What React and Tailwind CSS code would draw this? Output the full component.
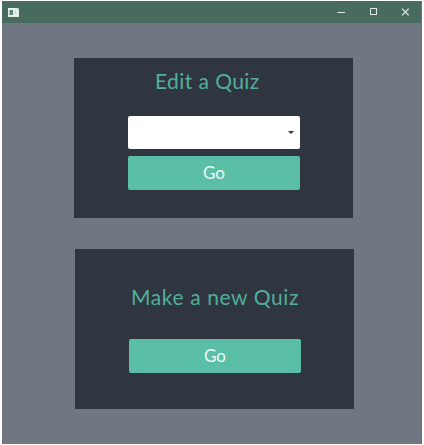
function TitleBar() {
  return (
    <header className="flex h-[22px] shrink-0 items-center justify-between bg-[#486b60] pl-[6px] pr-3">
      <svg width="11" height="9" viewBox="0 0 11 9" aria-hidden="true">
        <rect width="11" height="9" fill="#e3f0ea" />
        <rect x="1.5" y="2" width="3.5" height="5" fill="#5d8276" />
        <rect x="7" y="3" width="1" height="3" fill="#b9cfc5" />
        <path d="M9 0h2v2z" fill="#9fb9ae" />
      </svg>
      <div className="flex items-center gap-6 text-[#dcebe4]">
        <svg width="8" height="8" viewBox="0 0 8 8" stroke="currentColor" aria-label="Minimize">
          <path d="M0.5 4.5h7.5" />
        </svg>
        <svg width="8" height="8" viewBox="0 0 8 8" fill="none" stroke="currentColor" aria-label="Maximize">
          <rect x="1.5" y="0.5" width="6" height="6" />
        </svg>
        <svg width="8" height="8" viewBox="0 0 8 8" stroke="currentColor" strokeWidth="1.2" aria-label="Close">
          <path d="M1 0.7l6.7 6.7M7.7 0.7L1 7.4" />
        </svg>
      </div>
    </header>
  );
}

function GoButton() {
  return (
    <button className="block h-[34px] w-[172px] rounded-[2px] bg-[#5bbfa8] text-center text-[17px] leading-[34px] text-[#effbf7]">
      Go
    </button>
  );
}

export default function App() {
  return (
    <div className="h-[445px] w-[424px] bg-white pl-[2px] pt-px font-[Lato,sans-serif]">
      <div className="flex h-[443px] w-[420px] flex-col border-b border-r border-[#68777a] bg-[#717782]">
        <TitleBar />
        <main className="flex flex-col gap-[31px] pl-[72px] pt-[35px]">
          <section className="flex h-[160px] w-[279px] flex-col bg-[#2f3640] pl-[54px] pt-[9px]">
            <h1 className="ml-[27px] h-[28px] whitespace-nowrap text-[21px] leading-[28px] tracking-[0.42px] text-[#51af9c]">
              Edit a Quiz
            </h1>
            <div className="mt-[21px] flex h-[33px] w-[172px] items-center justify-end rounded-[2px] bg-white pr-[6px]">
              <svg width="6" height="3" viewBox="0 0 6 3" aria-hidden="true">
                <path d="M0 0h6L3 3z" fill="#30343a" />
              </svg>
            </div>
            <div className="mt-[7px]">
              <GoButton />
            </div>
          </section>
          <section className="ml-px flex h-[160px] w-[279px] flex-col bg-[#2f3640] pl-[54px] pt-[34px]">
            <h1 className="ml-[2px] h-[28px] whitespace-nowrap text-[21px] leading-[28px] tracking-[0.6px] text-[#51af9c]">
              Make a new Quiz
            </h1>
            <div className="mt-[28px]">
              <GoButton />
            </div>
          </section>
        </main>
      </div>
    </div>
  );
}
